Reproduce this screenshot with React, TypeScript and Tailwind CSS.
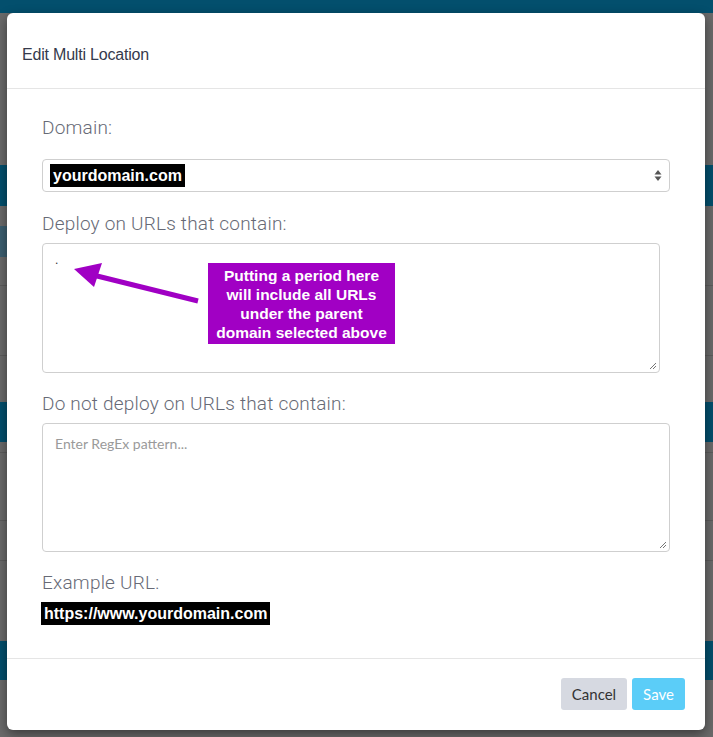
import React from "react"

function SelectArrows() {
  return (
    <svg width="8" height="13" viewBox="0 0 8 13" className="shrink-0">
      <path d="M4 1 L7.5 5.5 L0.5 5.5 Z" fill="#555" />
      <path d="M4 12 L7.5 7.5 L0.5 7.5 Z" fill="#555" />
    </svg>
  )
}

function ResizeGrip() {
  return (
    <svg width="9" height="9" viewBox="0 0 9 9" className="absolute right-[2px] bottom-[2px]">
      <path d="M8 2 L2 8 M8 5 L5 8" stroke="#777" strokeWidth="1" />
    </svg>
  )
}

function PurpleArrow() {
  return (
    <svg width="170" height="65" viewBox="0 0 170 65" className="absolute left-0 top-0">
      <line x1="46" y1="30" x2="155" y2="57" stroke="#a000c4" strokeWidth="5" />
      <path d="M31 25 L59 19 L51 43 Z" fill="#a000c4" />
    </svg>
  )
}

export default function App() {
  const label = "text-[19px] leading-[26px] tracking-[0.2px] text-[#676a76] font-light"
  const labelFont = { fontFamily: 'Roboto, "Liberation Sans", sans-serif' }
  return (
    <div
      className="relative w-full h-[737px] overflow-hidden bg-[#6a6a6a]"
      style={{ fontFamily: '"Liberation Sans", Arial, sans-serif' }}
    >
      {/* dimmed page behind the modal */}
      <div className="flex flex-col">
        <div className="h-[13px] bg-[#034f6d]" />
        <div className="h-[152px]" />
        <div className="h-[41px] bg-[#034f6d]" />
        <div className="h-[20px]" />
        <div className="h-[31px] w-[24px] bg-[#3c5f70]" />
        <div className="h-[29px] border-b border-[#5c5c5c]" />
        <div className="h-[70px] border-b border-[#5c5c5c]" />
        <div className="h-[46px]" />
        <div className="h-[40px] bg-[#034f6d]" />
        <div className="h-[11px] border-b border-[#5c5c5c]" />
        <div className="h-[68px] border-b border-[#5c5c5c]" />
        <div className="h-[40px] border-b border-[#5c5c5c]" />
        <div className="h-[80px]" />
        <div className="h-[39px] bg-[#034f6d]" />
      </div>

      {/* modal */}
      <div className="absolute left-[7px] top-[13px] w-[698px] rounded-[6px] bg-white shadow-[0_4px_12px_rgba(0,0,0,0.45)]">
        <div className="h-[76px] flex items-center pl-[15px] pt-[9px] border-b border-[#e5e5e5]">
          <h3 className="text-[16px] text-[#353a4c] tracking-[-0.2px]">Edit Multi Location</h3>
        </div>

        <div className="px-[35px] pt-[26px] pb-[32px] flex flex-col">
          <div className={label} style={labelFont}>Domain:</div>
          <div className="mt-[18px] h-[33px] rounded-[4px] border border-[#cfcfcf] flex items-center pl-[7px] pr-[7px] justify-between">
            <span className="bg-black text-white font-bold text-[16px] leading-[23px] px-[3px]">yourdomain.com</span>
            <SelectArrows />
          </div>

          <div className={`${label} mt-[19px]`} style={labelFont}>Deploy on URLs that contain:</div>
          <div className="relative mt-[6px] w-[618px] h-[130px] rounded-[4px] border border-[#cfcfcf]">
            <div className="absolute left-[12px] top-[10px] text-[12px] leading-[12px] text-[#333]">.</div>
            <PurpleArrow />
            <div className="absolute left-[165px] top-[19px] w-[187px] h-[81px] bg-[#a100c4] text-white font-bold text-[15.5px] leading-[19px] text-center flex items-center justify-center">
              Putting a period here
              <br />
              will include all URLs
              <br />
              under the parent
              <br />
              domain selected above
            </div>
            <ResizeGrip />
          </div>

          <div className={`${label} mt-[18px]`} style={labelFont}>Do not deploy on URLs that contain:</div>
          <div className="relative mt-[6px] h-[129px] rounded-[4px] border border-[#cfcfcf] px-[12px] pt-[8px]">
            <span className="text-[14px] text-[#9a9a9a]" style={{ fontFamily: "Lato, sans-serif" }}>
              Enter RegEx pattern...
            </span>
            <ResizeGrip />
          </div>

          <div className={`${label} mt-[18px]`} style={labelFont}>Example URL:</div>
          <div className="mt-[6px]">
            <span className="-ml-[1px] bg-black text-white font-bold text-[16px] leading-[23px] px-[3px] inline-block">
              https://www.yourdomain.com
            </span>
          </div>
        </div>

        <div className="border-t border-[#e5e5e5] px-[20px] pt-[19px] pb-[20px] flex justify-end gap-[5px]" style={{ fontFamily: "Lato, sans-serif" }}>
          <button className="h-[32px] w-[66px] rounded-[3px] bg-[#d6d9e1] text-[#333] text-[15px]">Cancel</button>
          <button className="h-[32px] w-[53px] rounded-[3px] bg-[#5bcdf8] text-white text-[15px]">Save</button>
        </div>
      </div>
    </div>
  )
}
